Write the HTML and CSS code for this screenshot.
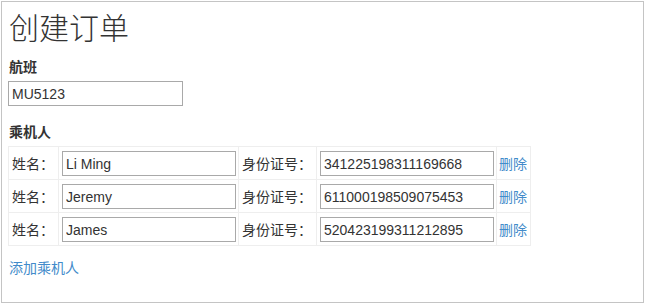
FILE: index.html
```html
<!DOCTYPE html>
<html lang="zh-CN">
<head>
<meta charset="utf-8">
<title>创建订单</title>
<link rel="stylesheet" href="styles.css">
</head>
<body>
<div class="frame">
  <h1 class="title">创建订单</h1>
  <div class="label label-flight">航班</div>
  <input class="field field-flight" type="text" value="MU5123">
  <div class="label label-pax">乘机人</div>
  <table class="pax">
    <tbody>
      <tr>
        <td class="cell-text">姓名：</td>
        <td class="cell-input"><input class="field" type="text" value="Li Ming"></td>
        <td class="cell-text">身份证号：</td>
        <td class="cell-input"><input class="field" type="text" value="341225198311169668"></td>
        <td class="cell-action"><a class="link" href="#">删除</a></td>
      </tr>
      <tr>
        <td class="cell-text">姓名：</td>
        <td class="cell-input"><input class="field" type="text" value="Jeremy"></td>
        <td class="cell-text">身份证号：</td>
        <td class="cell-input"><input class="field" type="text" value="611000198509075453"></td>
        <td class="cell-action"><a class="link" href="#">删除</a></td>
      </tr>
      <tr>
        <td class="cell-text">姓名：</td>
        <td class="cell-input"><input class="field" type="text" value="James"></td>
        <td class="cell-text">身份证号：</td>
        <td class="cell-input"><input class="field" type="text" value="520423199311212895"></td>
        <td class="cell-action"><a class="link" href="#">删除</a></td>
      </tr>
    </tbody>
  </table>
  <a class="link add-link" href="#">添加乘机人</a>
</div>
</body>
</html>
```

FILE: styles.css
```css
html, body {
  margin: 0;
  padding: 0;
  background: #ffffff;
}

body {
  font-family: "Liberation Sans", "Noto Sans CJK SC", sans-serif;
  font-size: 14px;
  color: #333333;
}

.frame {
  box-sizing: border-box;
  margin: 1px;
  width: 643px;
  height: 302px;
  border: 1px solid #c4c4c4;
  padding: 5px 6px 0 6px;
  display: flex;
  flex-direction: column;
  align-items: flex-start;
}

.title {
  margin: 0;
  font-family: "Noto Sans CJK SC", sans-serif;
  font-weight: 300;
  font-size: 30px;
  line-height: 38px;
  color: #333333;
  padding-left: 1px;
}

.label {
  font-family: "Noto Sans CJK SC", sans-serif;
  font-weight: 700;
  font-size: 14px;
  line-height: 20px;
  color: #333333;
  padding-left: 1px;
}

.label-flight {
  margin-top: 11px;
}

.label-pax {
  margin-top: 15px;
}

.field {
  box-sizing: border-box;
  width: 175px;
  height: 25px;
  margin: 0;
  padding: 0 3px;
  border: 1px solid #a9a9a9;
  font-family: "Liberation Sans", "Noto Sans CJK SC", sans-serif;
  font-size: 14px;
  color: #333333;
  background: #ffffff;
  outline: none;
}

.field-flight {
  margin-top: 5px;
}

.pax {
  margin-top: 5px;
  border-collapse: collapse;
}

.pax td {
  border: 1px solid #eeeeee;
  height: 25px;
  font-family: "Noto Sans CJK SC", sans-serif;
  font-size: 14px;
  line-height: 25px;
  white-space: nowrap;
  vertical-align: middle;
}

.cell-text {
  padding: 4px 4px 3px 3px;
}

.cell-input {
  padding: 4px 2px 3px 3px;
}

.cell-input .field {
  display: block;
  width: 174px;
}

.cell-action {
  padding: 4px 3px 3px 2px;
}

.link {
  color: #428bca;
  text-decoration: none;
  font-family: "Noto Sans CJK SC", sans-serif;
  font-size: 14px;
}

.add-link {
  margin-top: 11px;
  line-height: 20px;
  padding-left: 1px;
}
```
